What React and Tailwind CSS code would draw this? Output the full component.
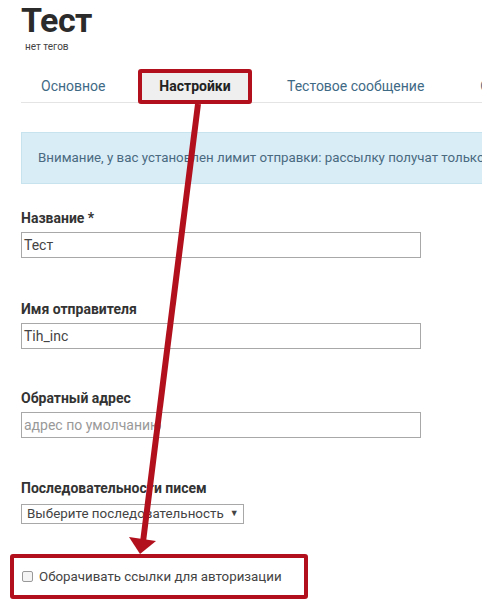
import React from "react";

const RED = "#b2101c";

function Field({ label, value, placeholder, top }) {
  return (
    <div className={top}>
      <div className="text-[14px] font-bold leading-[18px] text-[#333]">{label}</div>
      <div className="mt-[5px] flex h-[26px] w-[400px] items-center border border-[#a8a8a8] bg-white px-[2px] text-[14px]">
        {value ? (
          <span className="text-[#444]">{value}</span>
        ) : (
          <span className="text-[#999]">{placeholder}</span>
        )}
      </div>
    </div>
  );
}

export default function App() {
  return (
    <div
      className="relative h-[610px] w-[482px] overflow-hidden bg-white"
      style={{ fontFamily: 'Roboto, "Liberation Sans", sans-serif' }}
    >
      <div className="pl-[21px]">
        <h1 className="text-[34px] font-bold leading-[40px] tracking-[-0.5px] text-[#2b2b2b]">Тест</h1>
        <div className="mt-[1px] pl-[4px] text-[10px] leading-[12px] text-[#444]">нет тегов</div>

        {/* tabs */}
        <div className="mt-[17px] flex h-[33px] w-[600px] items-center border-b border-[#e4e4e4]">
          <div className="w-[117px] pl-[20px] text-[14px] text-[#3f6a86]">Основное</div>
          <div
            className="flex h-[35px] w-[114px] items-center justify-center rounded-[3px] border-[4px] bg-[#efefef] text-[14px] font-bold text-[#222]"
            style={{ borderColor: RED }}
          >
            Настройки
          </div>
          <div className="ml-[35px] text-[14px] text-[#3f6a86]">Тестовое сообщение</div>
          <div className="ml-[56px] text-[14px] text-[#3f6a86]">Отчёты</div>
        </div>

        {/* alert */}
        <div className="mt-[29px] flex h-[52px] w-[600px] items-center border border-[#c6e3ee] bg-[#d9edf7] pl-[16px] text-[13.3px] whitespace-nowrap text-[#4a6a80]">
          Внимание, у вас установлен лимит отправки: рассылку получат только
        </div>

        <Field top="mt-[25px]" label="Название *" value="Тест" />
        <Field top="mt-[42px]" label="Имя отправителя" value="Tih_inc" />
        <Field top="mt-[40px]" label="Обратный адрес" placeholder="адрес по умолчанию" />

        <div className="mt-[41px]">
          <div className="text-[14px] font-bold leading-[18px] text-[#333]">Последовательности писем</div>
          <div className="mt-[7px] flex h-[20px] w-[223px] items-center border border-[#a8a8a8] bg-white pl-[5px] text-[13.4px] whitespace-nowrap text-[#444]">
            <span>Выберите последовательность</span>
            <span className="ml-[6px] text-[9px]">▼</span>
          </div>
        </div>
      </div>

      {/* checkbox annotated */}
      <div
        className="ml-[10px] mt-[30px] flex h-[45px] w-[298px] items-center rounded-[3px] border-[4px] pl-[8px]"
        style={{ borderColor: RED }}
      >
        <span className="h-[11px] w-[11px] rounded-[2px] border border-[#999] bg-[#f4f4f4]" />
        <span className="ml-[6px] text-[13.3px] text-[#444]">Оборачивать ссылки для авторизации</span>
      </div>

      {/* arrow annotation */}
      <svg className="pointer-events-none absolute left-0 top-0" width="482" height="610">
        <line x1="198" y1="104" x2="143" y2="542" stroke={RED} strokeWidth="6" />
        <polygon points="129,537 156,541 140,554" fill={RED} />
      </svg>
    </div>
  );
}
